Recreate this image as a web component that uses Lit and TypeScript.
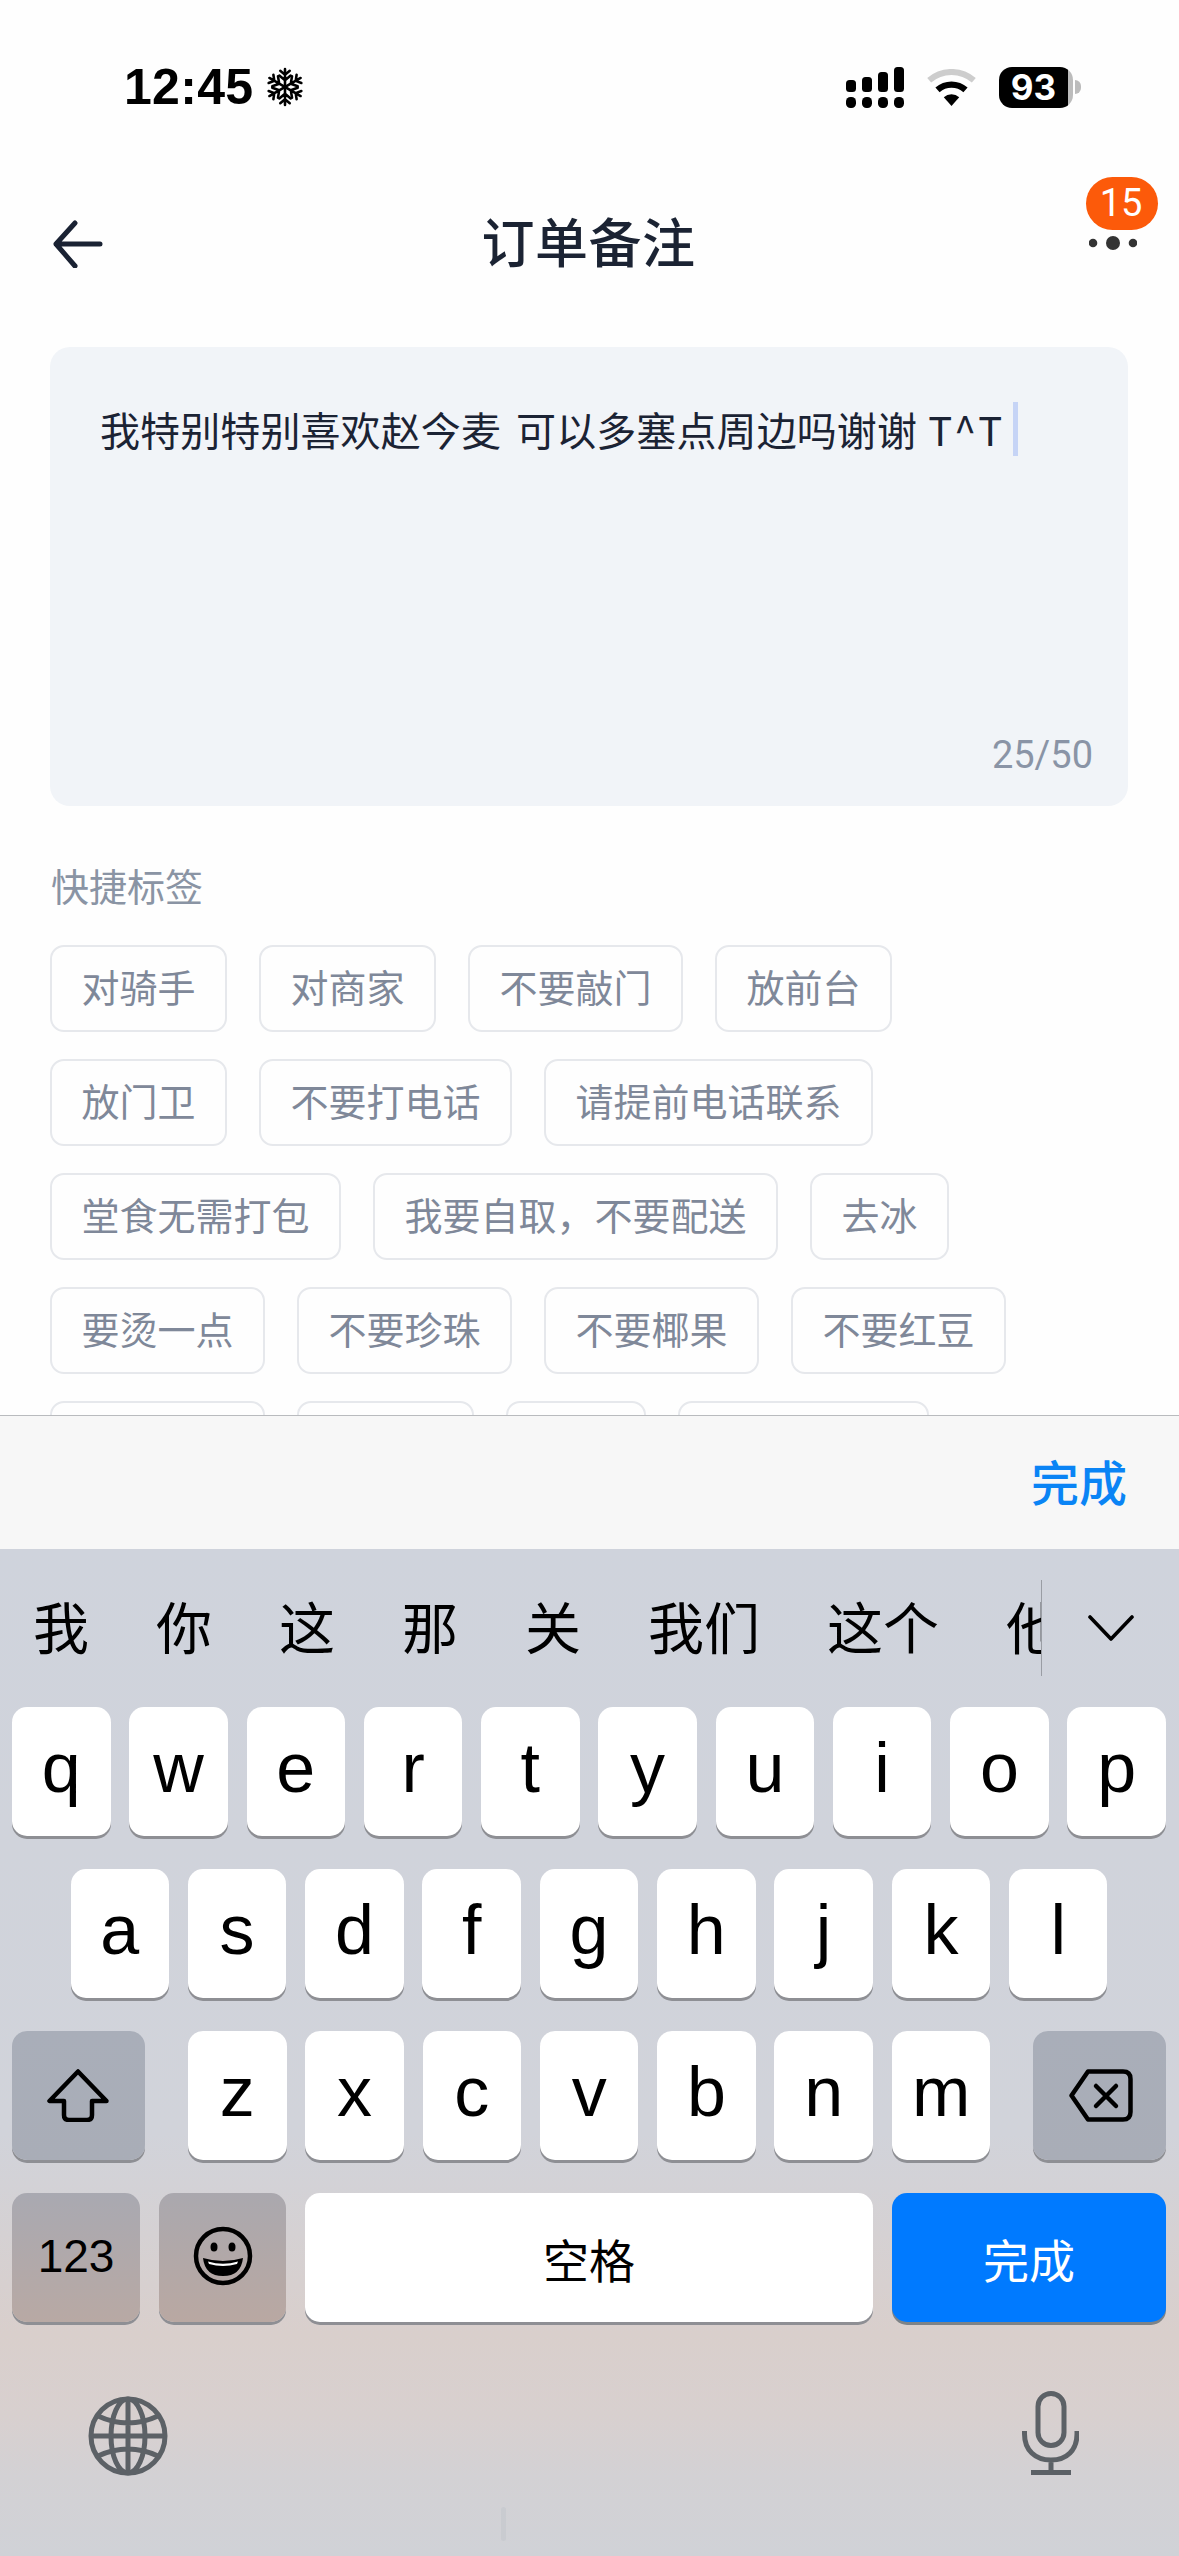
import { LitElement, html, css, svg } from "lit";
import { customElement } from "lit/decorators.js";

const TAG_ROWS = [
  ["对骑手", "对商家", "不要敲门", "放前台"],
  ["放门卫", "不要打电话", "请提前电话联系"],
  ["堂食无需打包", "我要自取，不要配送", "去冰"],
  ["要烫一点", "不要珍珠", "不要椰果", "不要红豆"],
];
const CANDIDATES = ["我", "你", "这", "那", "关", "我们", "这个", "他"];

const snowArm = svg`<path d="M20 1V39M20 7l-5-4M20 7l5-4M20 13l-6-5M20 13l6-5M20 33l-5 4M20 33l5 4M20 27l-6 5M20 27l6 5" />`;

@customElement("app-root")
export class AppRoot extends LitElement {
  static styles = css`
    :host {
      display: block;
      position: relative;
      width: 1179px;
      height: 2556px;
      overflow: hidden;
      background: #fefefe;
      font-family: "Noto Sans CJK SC", "Liberation Sans", sans-serif;
    }
    .page { height: 1415px; overflow: hidden; }
    .status { display: flex; align-items: center; height: 175px; padding: 0 98px 1px 124px; box-sizing: border-box; }
    .time { font: 700 50px/1 "Liberation Sans", sans-serif; color: #000; letter-spacing: 0.3px; }
    .snow { width: 38px; height: 40px; margin-left: 13px; stroke: #000; stroke-width: 2.7; fill: none; stroke-linecap: round; }
    .sys { display: flex; align-items: center; margin-left: auto; gap: 23px; }
    .signal { width: 58px; height: 41px; display: block; }
    .wifi { width: 49px; height: 37px; display: block; }
    .battery { display: flex; align-items: center; }
    .batt-body {
      width: 74px; height: 41px; border-radius: 13px;
      background: linear-gradient(to right, #000 93%, #bcbcbc 93%);
      color: #fff; font: 700 35px/41px Inter, sans-serif; text-align: center; padding-right: 5px; box-sizing: border-box;
    }
    .batt-cap { width: 6px; height: 14px; margin-left: 2px; background: #bcbcbc; border-radius: 0 7px 7px 0; }

    .nav { position: relative; display: flex; align-items: center; justify-content: center; height: 136px; }
    .back { position: absolute; left: 51px; top: 45px; width: 54px; height: 48px; fill: none; stroke: #1a2233; stroke-width: 5; stroke-linecap: round; stroke-linejoin: round; }
    .title { font-size: 53px; font-weight: 500; color: #1b2333; line-height: 1; letter-spacing: 0.5px; padding-bottom: 5px; margin-left: -2px; }
    .badge {
      position: absolute; left: 1086px; top: 2px; width: 72px; height: 53px; border-radius: 27px;
      background: #fc5a0a; color: #fff; font: 400 38px/53px Roboto, sans-serif; text-align: center; padding-right: 2px; box-sizing: border-box;
    }
    .dots { position: absolute; left: 1089px; top: 57px; width: 48px; height: 22px; fill: #333; }

    .card {
      position: relative; height: 459px; margin: 36px 51px 0 50px; box-sizing: border-box; padding: 55px 51px 0;
      background: #f1f4f8; border-radius: 20px;
    }
    .note { display: flex; align-items: center; gap: 9px; height: 54px; }
    .note-text { font-size: 40px; line-height: 54px; color: #1b2334; white-space: pre; word-spacing: 6px; letter-spacing: 0.1px; margin-left: -1px; }
    .note-latin { letter-spacing: 2px; margin-left: -4px; }
    .caret { width: 5px; height: 54px; background: #c6d4f6; }
    .count { position: absolute; right: 35px; bottom: 28px; font: 400 38px/46px Roboto, sans-serif; color: #8a94a6; }

    .label { margin: 54px 0 0 51px; font-size: 38px; line-height: 50px; color: #8a94a4; }
    .tags { display: flex; flex-direction: column; gap: 27px; margin: 35px 0 0 50px; }
    .tag-row { display: flex; gap: 32px; }
    .tag {
      height: 87px; box-sizing: border-box; padding: 0 29.5px; border: 2px solid #e6e8ec; border-radius: 14px;
      font-size: 38px; line-height: 77px; color: #7f8899; background: #fefefe; white-space: nowrap;
    }
    .w5 { width: 215px; } .w3 { width: 177px; } .w2 { width: 140px; } .w6 { width: 251px; }

    .toolbar {
      display: flex; align-items: center; justify-content: flex-end; box-sizing: border-box; height: 134px;
      padding: 0 52px 6px 0; background: #f7f7f7; border-top: 1px solid #b9bbbe;
    }
    .toolbar span { font-size: 48px; font-weight: 500; color: #0a84f5; line-height: 1; }

    .kb {
      height: 1007px; box-sizing: border-box;
      background: linear-gradient(to bottom, #cfd3dc 0%, #d1d3da 58%, #d9cfcc 78%, #d8d0cf 86%, #d3d1d4 92%, #d0d2d7 100%);
    }
    .cands { display: flex; align-items: center; height: 158px; }
    .cand-list {
      display: flex; gap: 67px; width: 1042px; height: 96px; align-items: center; box-sizing: border-box; padding-left: 33px;
      overflow: hidden; border-right: 1px solid #9a9da4; margin-top: -1px; flex: none;
      font-size: 56px; line-height: 90px; color: #000; white-space: nowrap;
    }
    .cand-list span { flex: none; margin-top: -6px; }
    .chev { width: 46px; height: 26px; margin-left: 46px; fill: none; stroke: #000; stroke-width: 3.6; stroke-linecap: round; stroke-linejoin: round; }

    .rows { display: flex; flex-direction: column; gap: 33px; padding: 0 13px 0 12px; }
    .row { display: flex; justify-content: space-between; height: 129px; }
    .row.home { justify-content: center; gap: 18.8px; }
    .row.third { justify-content: flex-start; }
    .group { display: flex; gap: 18.8px; margin: 0 43px; }
    .key {
      display: flex; align-items: center; justify-content: center; width: 98.5px; height: 129px; flex: none;
      border-radius: 15px; background: #fff; box-shadow: 0 3px 0 #8e8f94; color: #000;
      font: 400 70px/1 "Liberation Sans", sans-serif; padding-bottom: 8px; box-sizing: border-box;
    }
    .fn { width: 133px; padding-bottom: 0; background: linear-gradient(to bottom, #a9aeb9, #a9adb7); }
    .fn svg { fill: none; stroke: #000; stroke-width: 4.5; stroke-linejoin: round; stroke-linecap: round; }
    .shift svg { width: 62px; height: 53px; margin-left: -2px; }
    .del svg { width: 64px; height: 53px; margin-left: 2px; }
    .num { width: 128px; margin-right: 19px; padding-bottom: 3px; font-size: 46px; background: linear-gradient(to bottom, #a9a9b1, #b8a9a4); }
    .emoji { width: 127px; margin-right: 19px; padding-bottom: 4px; background: linear-gradient(to bottom, #aaa8ae, #b9a8a2); }
    .emoji svg { width: 60px; height: 60px; fill: none; stroke: #000; stroke-width: 4.5; }
    .space { width: 568px; margin-right: 19px; padding-bottom: 0; font: 400 46px/1 "Noto Sans CJK SC", sans-serif; }
    .done { width: 274px; padding-bottom: 0; background: #007aff; box-shadow: 0 3px 0 #7d8388; color: #fff; font: 400 46px/1 "Noto Sans CJK SC", sans-serif; }

    .bottom { display: flex; justify-content: space-between; align-items: flex-start; padding: 69px 100px 0 88px; }
    .globe { width: 80px; height: 80px; margin-top: 5px; fill: none; stroke: #5c6166; stroke-width: 5; }
    .mic { width: 57px; height: 84px; fill: none; stroke: #5c6166; stroke-width: 5; stroke-linecap: butt; }
    .home-mark { position: absolute; left: 501px; top: 2507px; width: 5px; height: 34px; background: #c9cbd0; border-radius: 3px; }
  `;

  render() {
    return html`
      <div class="page">
        <div class="status">
          <span class="time">12:45</span>
          <svg class="snow" viewBox="0 0 40 40">
            ${snowArm}
            <g transform="rotate(60 20 20)">${snowArm}</g>
            <g transform="rotate(120 20 20)">${snowArm}</g>
          </svg>
          <div class="sys">
            <svg class="signal" viewBox="0 0 58 41">
              <rect x="0" y="13" width="10" height="12" rx="3.5" />
              <rect x="16" y="10" width="10" height="15" rx="3.5" />
              <rect x="32" y="5" width="10" height="20" rx="3.5" />
              <rect x="48" y="0" width="10" height="25" rx="3.5" />
              <rect x="0" y="30" width="10" height="11" rx="4.5" />
              <rect x="16" y="30" width="10" height="11" rx="4.5" />
              <rect x="32" y="30" width="10" height="11" rx="4.5" />
              <rect x="48" y="30" width="10" height="11" rx="4.5" />
            </svg>
            <svg class="wifi" viewBox="0 0 49 37">
              <path d="M2.2 11.3A34 34 0 0 1 46.8 11.3" fill="none" stroke="#cdcdcd" stroke-width="6" />
              <path d="M10.5 20.9A21.3 21.3 0 0 1 38.5 20.9" fill="none" stroke="#000" stroke-width="6.4" />
              <path d="M24.5 37L16.8 28.3A11.5 11.5 0 0 1 32.2 28.3Z" fill="#000" />
            </svg>
            <div class="battery"><div class="batt-body">93</div><div class="batt-cap"></div></div>
          </div>
        </div>

        <div class="nav">
          <svg class="back" viewBox="0 0 54 48"><path d="M49 24H5M24 3L5 24L24 46" /></svg>
          <span class="title">订单备注</span>
          <div class="badge">15</div>
          <svg class="dots" viewBox="0 0 48 22">
            <circle cx="4" cy="11" r="4.3" /><circle cx="24" cy="11" r="7" /><circle cx="44" cy="11" r="4.3" />
          </svg>
        </div>

        <div class="card">
          <div class="note"><span class="note-text">我特别特别喜欢赵今麦 可以多塞点周边吗谢谢 <span class="note-latin">T^T</span></span><span class="caret"></span></div>
          <span class="count">25/50</span>
        </div>

        <div class="label">快捷标签</div>
        <div class="tags">
          ${TAG_ROWS.map((r) => html`<div class="tag-row">${r.map((t) => html`<div class="tag">${t}</div>`)}</div>`)}
          <div class="tag-row">
            <div class="tag w5"></div><div class="tag w3"></div><div class="tag w2"></div><div class="tag w6"></div>
          </div>
        </div>
      </div>

      <div class="toolbar"><span>完成</span></div>

      <div class="kb">
        <div class="cands">
          <div class="cand-list">${CANDIDATES.map((c) => html`<span>${c}</span>`)}</div>
          <svg class="chev" viewBox="0 0 46 26"><path d="M2 2L23 24L44 2" /></svg>
        </div>
        <div class="rows">
          <div class="row">${[..."qwertyuiop"].map((k) => html`<div class="key">${k}</div>`)}</div>
          <div class="row home">${[..."asdfghjkl"].map((k) => html`<div class="key">${k}</div>`)}</div>
          <div class="row third">
            <div class="key fn shift">
              <svg viewBox="0 0 62 53"><path d="M31 2.5L2.5 32H17V46Q17 51 22 51H40Q45 51 45 46V32H59.5Z" /></svg>
            </div>
            <div class="group">${[..."zxcvbnm"].map((k) => html`<div class="key">${k}</div>`)}</div>
            <div class="key fn del">
              <svg viewBox="0 0 64 53">
                <path d="M19 2.5H54Q61.500 2.500 61.500 10V43Q61.500 50.500 54 50.500H19L2.500 26.500Z" />
                <path d="M27 17L47 37M47 17L27 37" />
              </svg>
            </div>
          </div>
          <div class="row">
            <div class="key num">123</div>
            <div class="key emoji">
              <svg viewBox="0 0 60 60">
                <circle cx="30" cy="30" r="27" />
                <ellipse cx="21" cy="21" rx="3.500" ry="4.500" fill="#000" stroke="none" />
                <ellipse cx="39" cy="21" rx="3.500" ry="4.500" fill="#000" stroke="none" />
                <path d="M10 32Q30 38 50 32Q48 50 30 50Q12 50 10 32Z" fill="#000" stroke="none" />
                <path d="M15 35.500Q30 40 45 35.500L44 38Q30 42 16 38Z" fill="#fff" stroke="none" />
              </svg>
            </div>
            <div class="key space">空格</div>
            <div class="key done">完成</div>
          </div>
        </div>
        <div class="bottom">
          <svg class="globe" viewBox="0 0 80 80">
            <circle cx="40" cy="40" r="37" />
            <ellipse cx="40" cy="40" rx="17" ry="37" />
            <path d="M40 3V77M3 40H77M10 20Q40 34 70 20M10 60Q40 46 70 60" />
          </svg>
          <svg class="mic" viewBox="0 0 57 84">
            <rect x="16" y="2.500" width="26" height="52" rx="13" />
            <path d="M2.500 40V43C2.500 59 13 69 29 69C45 69 55 59 55 43V40M29 69V81M9 81.500H49" />
          </svg>
        </div>
      </div>
      <div class="home-mark"></div>
    `;
  }
}
